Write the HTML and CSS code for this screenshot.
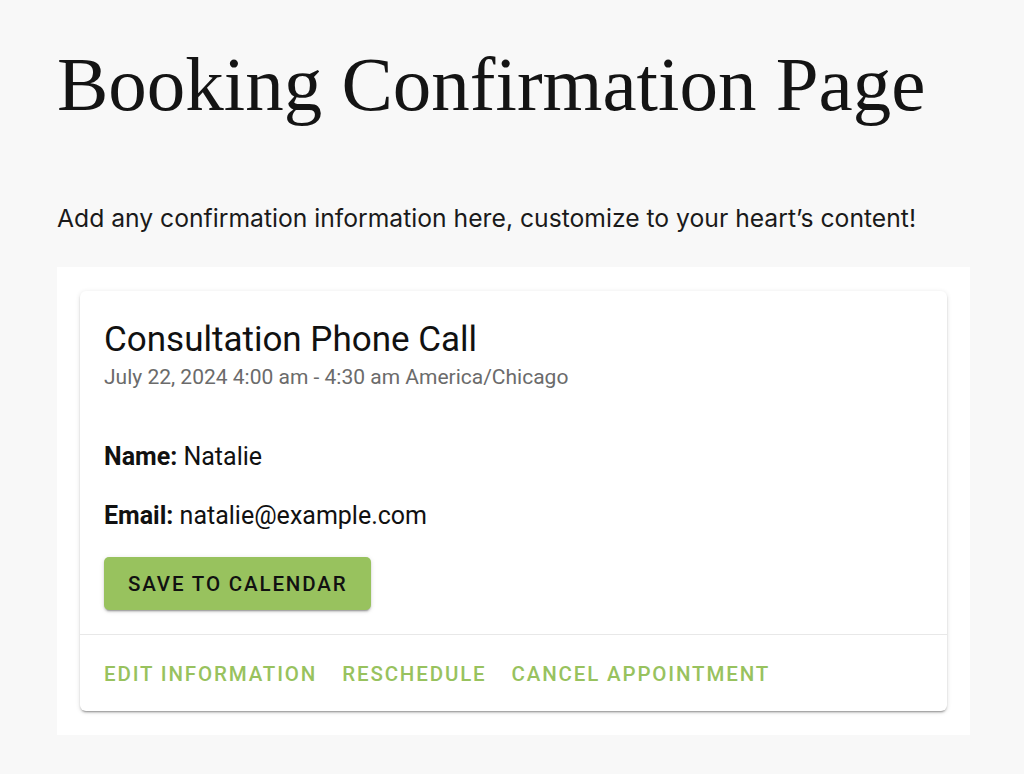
FILE: index.html
```html
<!DOCTYPE html>
<html lang="en">
<head>
    <meta charset="UTF-8">
    <meta name="viewport" content="width=device-width, initial-scale=1.0">
    <title>Booking Confirmation Page</title>
    <link rel="stylesheet" href="styles.css">
</head>
<body>
    <div class="page">
        <h1>Booking Confirmation Page</h1>
        <p class="intro">Add any confirmation information here, customize to your heart’s content!</p>

        <div class="panel">
            <div class="card">
                <div class="card-body">
                    <h2 class="card-title">Consultation Phone Call</h2>
                    <div class="card-subtitle">July 22, 2024 4:00 am - 4:30 am America/Chicago</div>

                    <p class="detail"><strong>Name:</strong> Natalie</p>
                    <p class="detail"><strong>Email:</strong> natalie@example.com</p>

                    <button type="button" class="btn btn-primary">Save to Calendar</button>
                </div>
                <div class="card-actions">
                    <button type="button" class="btn btn-text">Edit Information</button>
                    <button type="button" class="btn btn-text">Reschedule</button>
                    <button type="button" class="btn btn-text">Cancel Appointment</button>
                </div>
            </div>
        </div>
    </div>
</body>
</html>
```

FILE: styles.css
```css
body {
    margin: 0;
    padding: 0;
    background-color: #F8F8F8;
    color: #111111;
    font-family: Roboto, "Liberation Sans", sans-serif;
}

.page {
    padding: 34px 54px 40px 57px;
}

h1 {
    margin: 0;
    font-family: "Liberation Serif", serif;
    font-weight: 400;
    font-size: 77px;
    line-height: 100px;
    color: #141414;
}

.intro {
    margin: 67px 0 0;
    font-family: Inter, "Liberation Sans", sans-serif;
    font-size: 24.7px;
    line-height: 34px;
    color: #1a1a1a;
}

.panel {
    margin-top: 32px;
    padding: 24px 23px;
    background-color: #FFFFFF;
}

.card {
    background-color: #FFFFFF;
    border-radius: 6px;
    box-shadow: 0 3px 1px -2px rgba(0, 0, 0, 0.2), 0 2px 2px 0 rgba(0, 0, 0, 0.14), 0 1px 5px 0 rgba(0, 0, 0, 0.12);
}

.card-body {
    padding: 24px 24px 24px;
    border-bottom: 1px solid #E8E8E8;
}

.card-title {
    margin: 0;
    font-size: 35px;
    font-weight: 400;
    line-height: 50px;
    color: #111111;
}

.card-subtitle {
    font-size: 21px;
    line-height: 24px;
    color: #6b6b6b;
}

.detail {
    margin: 52px 0 0;
    font-size: 25px;
    line-height: 32px;
}

.detail + .detail {
    margin-top: 27px;
}

.detail strong {
    font-weight: 700;
}

.btn {
    font-family: Roboto, "Liberation Sans", sans-serif;
    font-weight: 500;
    text-transform: uppercase;
    letter-spacing: 0.09em;
    border: none;
    cursor: pointer;
}

.btn-primary {
    display: block;
    margin-top: 25px;
    height: 53px;
    padding: 0 24px;
    font-size: 20.5px;
    color: #111111;
    background-color: #98C25E;
    border-radius: 5px;
    box-shadow: 0 3px 1px -2px rgba(0, 0, 0, 0.2), 0 2px 2px 0 rgba(0, 0, 0, 0.14), 0 1px 5px 0 rgba(0, 0, 0, 0.12);
}

.card-actions {
    display: flex;
    gap: 25px;
    padding: 25px 24px 23px;
}

.btn-text {
    padding: 0;
    font-size: 20.5px;
    line-height: 28px;
    color: #98C25E;
    background: none;
}
```
